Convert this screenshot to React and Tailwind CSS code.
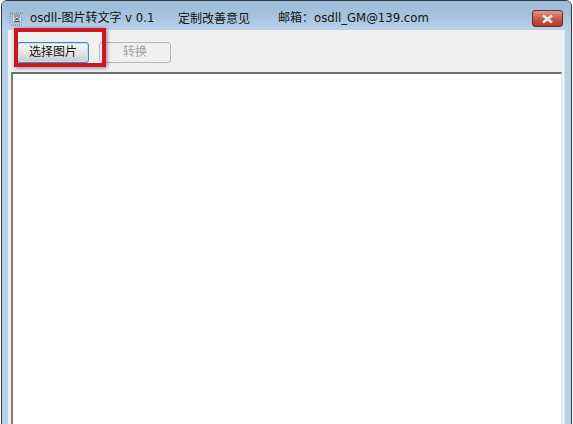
const font = { fontFamily: '"DejaVu Sans", "Noto Sans CJK SC", sans-serif' };

function AppIcon() {
  return (
    <svg width="16" height="16" viewBox="0 0 16 16" className="shrink-0">
      <path d="M1 2h14M2 14h12M1 3v10" stroke="#6a7480" strokeWidth="1" strokeDasharray="1 1" fill="none" />
      <rect x="3.5" y="3.5" width="9" height="8" fill="#d5deea" stroke="#7a8490" strokeDasharray="1 1" />
      <path d="M5 5h6M5.5 10.5h5M5.5 6.5l5 3M10.5 6.5l-5 3" stroke="#444" strokeWidth="0.9" fill="none" />
    </svg>
  );
}

export default function App() {
  return (
    <div className="relative w-[573px] h-[424px] overflow-hidden bg-white" style={font}>
      <div className="w-full h-full pl-px">
        <div className="w-[571px] h-[440px] rounded-t-[6px] border border-[#2e3a44] bg-[#b9d1e8] flex flex-col">
          {/* title bar */}
          <div className="h-[29px] shrink-0 flex items-center pt-[6px] pl-[7px] pr-[3px] rounded-t-[5px] bg-gradient-to-b from-[#9dbad8] via-[#a6c2de] to-[#bcd3ea] text-[12px] text-[#111] leading-none">
            <AppIcon />
            <span className="ml-[5px] w-[148px] whitespace-nowrap">
              <span className="text-[11.7px]">osdll-</span>图片转文字<span className="text-[11.7px]"> v 0.1</span>
            </span>
            <span className="w-[100px] whitespace-nowrap">定制改善意见</span>
            <span className="whitespace-nowrap">
              邮箱：<span className="text-[11.7px]">osdll_GM@139.com</span>
            </span>
            <div className="ml-auto mr-[5px] w-[31px] h-[17px] rounded-[3px] border border-[#6b2a26] bg-gradient-to-b from-[#dc9a90] via-[#c9574c] to-[#b8352a] flex items-center justify-center">
              <svg width="13" height="10" viewBox="0 0 13 10">
                <path d="M2 1.5l9 7M11 1.5l-9 7" stroke="#f4efe8" strokeWidth="2.6" />
              </svg>
            </div>
          </div>
          {/* client area */}
          <div className="mx-[6px] flex-1 bg-[#f0f0f0] border-r border-[#dfe3e8] flex flex-col">
            <div className="h-[42px] shrink-0 flex items-center pl-[9px] pt-[2px] gap-[10px] text-[12px] leading-none">
              <button className="w-[72px] h-[21px] rounded-[3px] border border-[#3c8fb8] bg-gradient-to-b from-[#f6f6f6] via-[#e6e6e6] to-[#c8c8c8] text-[#111] shadow-[inset_0_0_0_1px_#b5e4f5]">
                选择图片
              </button>
              <button className="w-[72px] h-[21px] rounded-[3px] border border-[#b5b5b5] bg-[#f0f0f0] text-[#a0a0a0]">
                转换
              </button>
            </div>
            <div className="flex-1 ml-[3px] mr-[2px] bg-white border-t-2 border-l-2 border-r border-t-[#6d6d6d] border-l-[#7b7f7b] border-r-[#e3e3e3]" />
          </div>
        </div>
      </div>
      {/* red highlight drawn over the screenshot */}
      <div className="absolute left-[14px] top-[28px] w-[92px] h-[39px] border-[4px] border-[#cc1620] shadow-[1px_1px_4px_rgba(0,0,0,0.45)]" />
    </div>
  );
}
